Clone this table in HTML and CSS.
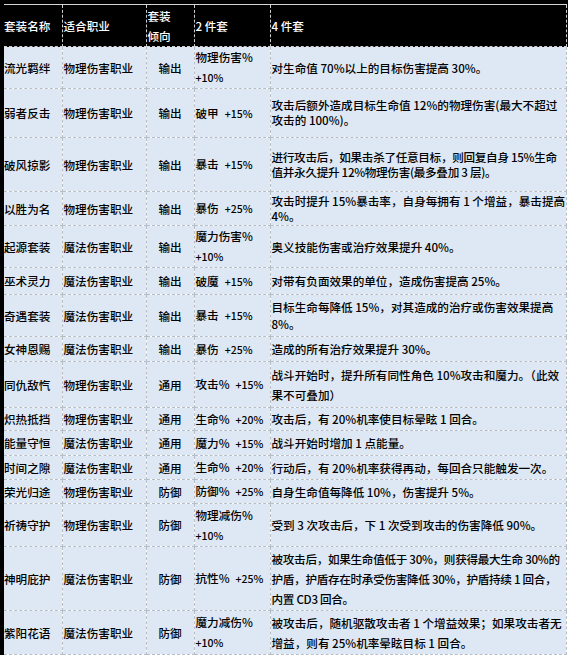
FILE: index.html
```html
<!DOCTYPE html>
<html lang="zh-CN">
<head>
<meta charset="utf-8">
<title>套装</title>
<link rel="stylesheet" href="styles.css">
</head>
<body>
<div class="sheet">
<table class="sets">
<colgroup><col class="c1"><col class="c2"><col class="c3"><col class="c4"><col class="c5"></colgroup>
<thead>
<tr><th>套装名称</th><th>适合职业</th><th>套装<br>倾向</th><th>2 件套</th><th>4 件套</th></tr>
</thead>
<tbody>
<tr><td>流光羁绊</td><td>物理伤害职业</td><td class="type">输出</td><td>物理伤害%<br><span class="n">+10%</span></td><td>对生命值 70%以上的目标伤害提高 30%。</td></tr>
<tr><td>弱者反击</td><td>物理伤害职业</td><td class="type">输出</td><td>破甲<span class="v">+15%</span></td><td class="lh15">攻击后额外造成目标生命值 12%的物理伤害(最大不超过<br>攻击的 100%)。</td></tr>
<tr><td>破风掠影</td><td>物理伤害职业</td><td class="type">输出</td><td>暴击<span class="v">+15%</span></td><td class="lh15 tight">进行攻击后，如果击杀了任意目标，则回复自身 15%生命<br>值并永久提升 12%物理伤害(最多叠加 3 层)。</td></tr>
<tr><td>以胜为名</td><td>物理伤害职业</td><td class="type">输出</td><td>暴伤<span class="v">+25%</span></td><td class="lh15">攻击时提升 15%暴击率，自身每拥有 1 个增益，暴击提高<br>4%。</td></tr>
<tr><td>起源套装</td><td>魔法伤害职业</td><td class="type">输出</td><td>魔力伤害%<br><span class="n">+10%</span></td><td>奥义技能伤害或治疗效果提升 40%。</td></tr>
<tr><td>巫术灵力</td><td>魔法伤害职业</td><td class="type">输出</td><td>破魔<span class="v">+15%</span></td><td>对带有负面效果的单位，造成伤害提高 25%。</td></tr>
<tr><td>奇遇套装</td><td>魔法伤害职业</td><td class="type">输出</td><td>暴击<span class="v">+15%</span></td><td class="lh17">目标生命每降低 15%，对其造成的治疗或伤害效果提高<br>8%。</td></tr>
<tr><td>女神恩赐</td><td>魔法伤害职业</td><td class="type">输出</td><td>暴伤<span class="v">+25%</span></td><td>造成的所有治疗效果提升 30%。</td></tr>
<tr><td>同仇敌忾</td><td>物理伤害职业</td><td class="type">通用</td><td>攻击%<span class="v">+15%</span></td><td>战斗开始时，提升所有同性角色 10%攻击和魔力。（此效<br>果不可叠加）</td></tr>
<tr><td>炽热抵挡</td><td>物理伤害职业</td><td class="type">通用</td><td>生命%<span class="v">+20%</span></td><td>攻击后，有 20%机率使目标晕眩 1 回合。</td></tr>
<tr><td>能量守恒</td><td>魔法伤害职业</td><td class="type">通用</td><td>魔力%<span class="v">+15%</span></td><td>战斗开始时增加 1 点能量。</td></tr>
<tr><td>时间之隙</td><td>魔法伤害职业</td><td class="type">通用</td><td>生命%<span class="v">+20%</span></td><td>行动后，有 20%机率获得再动，每回合只能触发一次。</td></tr>
<tr><td>荣光归途</td><td>物理伤害职业</td><td class="type">防御</td><td>防御%<span class="v">+25%</span></td><td>自身生命值每降低 10%，伤害提升 5%。</td></tr>
<tr><td>祈祷守护</td><td>物理伤害职业</td><td class="type">防御</td><td>物理减伤%<br><span class="n">+10%</span></td><td>受到 3 次攻击后，下 1 次受到攻击的伤害降低 90%。</td></tr>
<tr><td>神明庇护</td><td>魔法伤害职业</td><td class="type">防御</td><td>抗性%<span class="v">+25%</span></td><td class="tight">被攻击后，如果生命值低于 30%，则获得最大生命 30%的<br>护盾，护盾存在时承受伤害降低 30%，护盾持续 1 回合，<br>内置 CD3 回合。</td></tr>
<tr><td>紫阳花语</td><td>魔法伤害职业</td><td class="type">防御</td><td>魔力减伤%<br><span class="n">+10%</span></td><td>被攻击后，随机驱散攻击者 1 个增益效果；如果攻击者无<br>增益，则有 25%机率晕眩目标 1 回合。</td></tr>
</tbody>
</table>
</div>
</body>
</html>
```

FILE: styles.css
```css
html, body {
  margin: 0;
  padding: 0;
  background: #fff;
}
body {
  width: 568px;
  height: 658px;
  overflow: hidden;
  font-family: "Noto Sans CJK SC", "Noto Sans", sans-serif;
  font-size: 11.6px;
  color: #000;
}
.sheet {
  padding-top: 4px;
  background: linear-gradient(#000 0, #000 47px, #fff 47px);
}
.sets {
  border-collapse: collapse;
  table-layout: fixed;
  width: 564px;
}
.c1 { width: 60px; }
.c2 { width: 84px; }
.c3 { width: 48px; }
.c4 { width: 76px; }
.c5 { width: 296px; }

.sets th,
.sets td {
  border: 1px dashed #b6bec8;
  padding: 0 0 0 1px;
  line-height: 20px;
  text-align: left;
  vertical-align: middle;
  white-space: nowrap;
  overflow: hidden;
  font-weight: 500;
}
.sets thead th {
  background: #000;
  color: #fff;
  border-color: #cfcfcf;
  border-top: 1px solid #d4d4d4;
}
.sets tbody td {
  background: #dde8f4;
}
.sets th:first-child,
.sets td:first-child {
  border-left: 4px solid #000;
  padding-left: 0;
}
.sets td.type {
  text-align: center;
  padding-left: 0;
}
.sets td.lh15 { line-height: 15px; }
.sets td.lh17 { line-height: 17px; }
.sets td.tight { letter-spacing: -0.3px; }

.v {
  margin-left: 6px;
  font-size: 10.5px;
}
.n {
  font-size: 10.5px;
}

.sets thead tr { height: 42px; }
.sets tbody tr:nth-child(1) { height: 42px; }
.sets tbody tr:nth-child(2) { height: 49px; }
.sets tbody tr:nth-child(3) { height: 54px; }
.sets tbody tr:nth-child(4) { height: 34px; }
.sets tbody tr:nth-child(5) { height: 40px; }
.sets tbody tr:nth-child(6) { height: 27px; }
.sets tbody tr:nth-child(7) { height: 42px; }
.sets tbody tr:nth-child(8) { height: 25px; }
.sets tbody tr:nth-child(9) { height: 46px; }
.sets tbody tr:nth-child(10) { height: 23px; }
.sets tbody tr:nth-child(11) { height: 25px; }
.sets tbody tr:nth-child(12) { height: 24px; }
.sets tbody tr:nth-child(13) { height: 24px; }
.sets tbody tr:nth-child(14) { height: 43px; }
.sets tbody tr:nth-child(15) { height: 64px; }
.sets tbody tr:nth-child(16) { height: 44px; }
```
